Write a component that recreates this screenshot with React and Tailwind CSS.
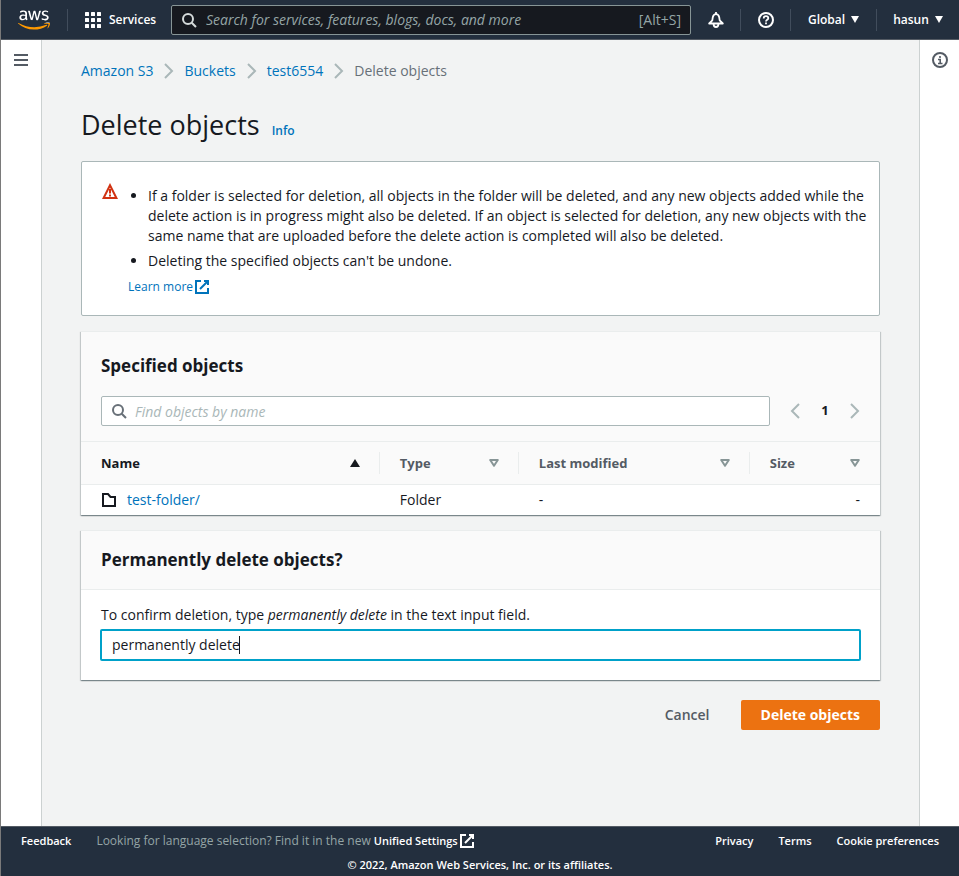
import { useState } from "react";
import { FaAws } from "react-icons/fa";

function AwsLogo() {
  return (
    <a href="#home" aria-label="AWS home" className="flex w-8 items-center">
      <svg width="0" height="0" className="absolute">
        <defs>
          <linearGradient id="aws-fill" gradientUnits="userSpaceOnUse" x1="0" y1="0" x2="0" y2="512">
            <stop offset="0.63" stopColor="#ffffff" />
            <stop offset="0.63" stopColor="#ff9900" />
          </linearGradient>
        </defs>
      </svg>
      <FaAws className="h-[26px] w-8" fill="url(#aws-fill)" />
    </a>
  );
}

function SearchIcon({ className }) {
  return (
    <svg viewBox="0 0 16 16" className={className} fill="none" stroke="currentColor" strokeWidth="2" aria-hidden="true">
      <circle cx="7" cy="7" r="5" />
      <path d="M10.7 10.7 15 15" />
    </svg>
  );
}

function ExternalIcon({ className }) {
  return (
    <svg viewBox="0 0 16 16" className={className} fill="none" stroke="currentColor" strokeWidth="2" aria-hidden="true">
      <path d="M10 2h4v4M6 10l8-8" />
      <path d="M14 9.048V14H2V2h5" />
    </svg>
  );
}

function Chevron({ left = false }) {
  return (
    <svg viewBox="0 0 16 16" className="h-4 w-4 shrink-0 text-[#aab7b8]" fill="none" stroke="currentColor" strokeWidth="2" aria-hidden="true">
      <path d={left ? "M12 1 5 8l7 7" : "m4 1 7 7-7 7"} />
    </svg>
  );
}

function Caret() {
  return (
    <svg viewBox="0 0 8 7" className="h-[7px] w-2" fill="currentColor" aria-hidden="true">
      <path d="M0 0h8L4 7z" />
    </svg>
  );
}

function SortIcon({ ascending = false }) {
  return ascending ? (
    <svg viewBox="0 0 10 8" className="h-2 w-[10px] text-[#16191f]" fill="currentColor" aria-hidden="true">
      <path d="M5 0l5 8H0z" />
    </svg>
  ) : (
    <svg viewBox="0 0 10 8" className="h-2 w-[10px] text-[#879596]" fill="none" stroke="currentColor" strokeWidth="2" strokeLinejoin="round" aria-hidden="true">
      <path d="M1.2 1h7.600L5 6.800z" />
    </svg>
  );
}

function Divider() {
  return <span className="h-[22px] w-px shrink-0 bg-[#414d5c]" />;
}

function Header() {
  return (
    <header className="flex h-10 items-center border-b border-[#545b64] bg-[#232f3e] pl-[17px] text-white">
      <AwsLogo />
      <span className="ml-[17px] flex">
        <Divider />
      </span>
      <button type="button" className="ml-[17px] flex items-center gap-2 text-[12px] font-semibold">
        <svg viewBox="0 0 16 16" className="h-4 w-4" fill="currentColor" aria-hidden="true">
          {[0, 6, 12].map((y) =>
            [0, 6, 12].map((x) => <rect key={`${x}-${y}`} x={x} y={y} width="4" height="4" rx="0.5" />)
          )}
        </svg>
        <span className="w-[45px] whitespace-nowrap">Services</span>
      </button>
      <label className="ml-[17px] flex h-[30px] min-w-0 flex-1 items-center rounded-xs border border-[#879596] bg-[#16191f] px-[9px] text-[#95a5a6]">
        <SearchIcon className="mr-[9px] h-4 w-4 shrink-0 text-[#d5dbdb]" />
        <input
          type="search"
          aria-label="Search"
          placeholder="Search for services, features, blogs, docs, and more"
          className="min-w-0 flex-1 bg-transparent text-[14px] italic outline-none placeholder:text-[#95a5a6]"
        />
        <span className="text-[14px]">[Alt+S]</span>
      </label>
      <button type="button" aria-label="Notifications" className="flex w-[49px] justify-center">
        <svg viewBox="0 0 16 16" className="h-4 w-4" fill="none" stroke="currentColor" strokeWidth="1.800" aria-hidden="true">
          <path d="M1.200 11.500h13.600L11.700 8.300 11.200 5.200C10.700 3.300 9.500 2.200 8 2.200S5.300 3.300 4.800 5.200L4.300 8.300z" strokeLinejoin="round" />
          <path d="M8 0v2M5.600 12c0 1.900 1 3 2.400 3s2.400-1.100 2.400-3" />
        </svg>
      </button>
      <Divider />
      <button type="button" aria-label="Help" className="flex w-[49px] justify-center">
        <svg viewBox="0 0 16 16" className="h-4 w-4" fill="none" stroke="currentColor" strokeWidth="2" aria-hidden="true">
          <circle cx="8" cy="8" r="7" />
          <path d="M5.700 6.400C5.700 5 6.700 4.200 8 4.200s2.300.8 2.300 2c0 1.500-2.300 1.600-2.300 3.200M8 10.600v1.700" strokeWidth="1.800" />
        </svg>
      </button>
      <Divider />
      <button type="button" className="flex w-[85px] items-center justify-center gap-[6px] text-[12px] font-semibold">
        Global <Caret />
      </button>
      <Divider />
      <button type="button" className="flex w-[82px] items-center justify-center gap-[6px] text-[12px] font-semibold">
        hasun <Caret />
      </button>
    </header>
  );
}

function Breadcrumbs() {
  return (
    <nav aria-label="Breadcrumbs">
      <ol className="flex items-center gap-[7px] text-[14px] leading-5 text-[#0073bb]">
        {["Amazon S3", "Buckets", "test6554"].map((name) => (
          <li key={name} className="flex items-center gap-2">
            <a href="#bucket">{name}</a>
            <Chevron />
          </li>
        ))}
        <li className="text-[#687078]">Delete objects</li>
      </ol>
    </nav>
  );
}

function Warning() {
  return (
    <section className="mt-[18px] flex rounded-xs border border-[#aab7b8] bg-white pt-[21px] pr-2 pb-[18px] pl-5">
      <svg viewBox="0 0 16 16" className="h-4 w-4 shrink-0 text-[#d13212]" fill="none" stroke="currentColor" strokeWidth="2" aria-label="Warning">
        <path d="M8 2.200 1.600 15h12.800z" />
        <path d="M8 6v4.500M8 11.500v2" />
      </svg>
      <div className="ml-[10px]">
        <ul className="flex list-disc flex-col gap-[5px] pt-[3px] pl-5 text-[14px] leading-5">
          <li>
            If a folder is selected for deletion, all objects in the folder will be deleted, and any new objects added while the
            delete action is in progress might also be deleted. If an object is selected for deletion, any new objects with the
            same name that are uploaded before the delete action is completed will also be deleted.
          </li>
          <li>Deleting the specified objects can't be undone.</li>
        </ul>
        <a href="#learn" className="mt-[6px] flex items-center gap-px text-[12px] leading-5 text-[#0073bb]">
          Learn more <ExternalIcon className="h-4 w-4" />
        </a>
      </div>
    </section>
  );
}

const panel =
  "border-t border-[#eaeded] bg-white shadow-[0_1px_1px_0_rgba(0,28,36,0.3),1px_1px_1px_0_rgba(0,28,36,0.15),-1px_1px_1px_0_rgba(0,28,36,0.15)]";

function HeadCell({ label, active = false, last = false }) {
  return (
    <th className="h-[43px] p-0 text-left font-bold">
      <button
        type="button"
        className={
          last
            ? "flex h-[22px] w-full items-center justify-between pr-5 pl-5"
            : "flex h-[22px] w-full items-center justify-between border-r border-[#eaeded] pr-[19px] pl-5"
        }
      >
        <span className={active ? "text-[#16191f]" : "text-[#545b64]"}>{label}</span>
        <SortIcon ascending={active} />
      </button>
    </th>
  );
}

function SpecifiedObjects() {
  return (
    <section className={`mt-[15px] ${panel}`}>
      <div className="bg-[#fafafa] px-5 pt-5 pb-[15px]">
        <h2 className="text-[17px] leading-7 font-bold">Specified objects</h2>
        <div className="mt-4 flex items-center">
          <label className="flex h-[30px] flex-1 items-center gap-2 rounded-xs border border-[#aab7b8] bg-white px-[9px]">
            <SearchIcon className="h-4 w-4 shrink-0 text-[#687078]" />
            <input
              type="search"
              aria-label="Find objects by name"
              placeholder="Find objects by name"
              className="min-w-0 flex-1 text-[14px] italic outline-none placeholder:text-[#aab7b8]"
            />
          </label>
          <div className="-mr-[3px] ml-[17px] flex items-center">
            <button type="button" aria-label="Previous page">
              <Chevron left />
            </button>
            <span className="w-11 text-center text-[13px] font-bold">1</span>
            <button type="button" aria-label="Next page">
              <Chevron />
            </button>
          </div>
        </div>
      </div>
      <table className="w-full table-fixed border-collapse text-[14px] leading-5">
        <colgroup>
          <col className="w-[37.400%]" />
          <col className="w-[17.400%]" />
          <col className="w-[28.900%]" />
          <col />
        </colgroup>
        <thead className="border-y border-[#eaeded] bg-[#fafafa] text-[13px]">
          <tr>
            <HeadCell label="Name" active />
            <HeadCell label="Type" />
            <HeadCell label="Last modified" />
            <HeadCell label="Size" last />
          </tr>
        </thead>
        <tbody>
          <tr className="h-[30px]">
            <td className="px-5">
              <div className="flex items-center gap-[10px]">
                <svg viewBox="0 0 16 16" className="h-4 w-4" fill="none" stroke="currentColor" strokeWidth="2" aria-hidden="true">
                  <path d="M2 14V2h5l2.500 3H14v9z" />
                </svg>
                <a href="#folder" className="text-[#0073bb]">test-folder/</a>
              </div>
            </td>
            <td className="px-5">Folder</td>
            <td className="px-5">-</td>
            <td className="px-5 text-right">-</td>
          </tr>
        </tbody>
      </table>
    </section>
  );
}

function Confirm() {
  const [value, setValue] = useState("permanently delete");
  return (
    <section className={`mt-[15px] ${panel}`}>
      <div className="border-b border-[#eaeded] bg-[#fafafa] px-5 py-[15px]">
        <h2 className="text-[17px] leading-7 font-bold">Permanently delete objects?</h2>
      </div>
      <div className="px-[19px] pt-[15px] pb-[19px]">
        <label htmlFor="confirm" className="block px-px text-[14px] leading-5">
          To confirm deletion, type <em>permanently delete</em> in the text input field.
        </label>
        <div className="relative mt-1">
          <input
            id="confirm"
            type="text"
            value={value}
            onChange={(event) => setValue(event.target.value)}
            className="block h-8 w-full rounded-xs border-2 border-[#00a1c9] bg-white px-[10px] text-[14px] outline-none"
          />
          <span className="absolute top-[7px] left-[139px] h-[18px] w-px bg-[#16191f]" />
        </div>
      </div>
    </section>
  );
}

function Footer() {
  return (
    <footer className="h-[50px] border-t border-[#545b64] bg-[#232f3e] px-5 pt-1 text-[11px] font-semibold text-white">
      <div className="flex items-center leading-5">
        <a href="#feedback">Feedback</a>
        <p className="ml-[25px] flex items-center">
          <span className="text-[12px] font-normal text-[#95a5a6]">
            Looking for language selection? Find it in the new&nbsp;
          </span>
          <a href="#settings" className="flex items-center gap-px">
            Unified Settings <ExternalIcon className="h-4 w-4" />
          </a>
        </p>
        <nav className="ml-auto flex gap-[25px]">
          <a href="#privacy">Privacy</a>
          <a href="#terms">Terms</a>
          <a href="#cookies">Cookie preferences</a>
        </nav>
      </div>
      <p className="mt-1 text-center leading-5">© 2022, Amazon Web Services, Inc. or its affiliates.</p>
    </footer>
  );
}

export default function App() {
  return (
    <div className="flex min-h-screen flex-col border-l border-[#7a7a7a] bg-white font-['Open_Sans','Noto_Sans',sans-serif] text-[#16191f]">
      <Header />
      <div className="flex flex-1">
        <aside className="w-[41px] shrink-0 border-r border-[#ccd1d1] pt-3 pl-3">
          <button type="button" aria-label="Open navigation" className="block">
            <svg viewBox="0 0 16 16" className="h-4 w-4 text-[#545b64]" fill="none" stroke="currentColor" strokeWidth="2" aria-hidden="true">
              <path d="M1 3h14M1 8h14M1 13h14" />
            </svg>
          </button>
        </aside>
        <main className="min-w-0 flex-1 bg-[#f2f3f3] px-[39px] pt-[21px]">
          <Breadcrumbs />
          <div className="mt-[26px] flex items-baseline gap-3">
            <h1 className="text-[27px] leading-9">Delete objects</h1>
            <a href="#info" className="text-[12px] font-semibold text-[#0073bb]">Info</a>
          </div>
          <Warning />
          <SpecifiedObjects />
          <Confirm />
          <div className="mt-5 flex justify-end gap-[11px] text-[14px] leading-5 font-bold">
            <button type="button" className="h-[30px] px-5 font-semibold text-[#545b64]">Cancel</button>
            <button type="button" className="h-[30px] rounded-xs bg-[#ec7211] px-5 text-white">Delete objects</button>
          </div>
        </main>
        <aside className="w-10 shrink-0 border-l border-[#ccd1d1] pt-3 pl-3">
          <button type="button" aria-label="Open info panel" className="block">
            <svg viewBox="0 0 16 16" className="h-4 w-4 text-[#545b64]" fill="none" stroke="currentColor" strokeWidth="2" aria-hidden="true">
              <circle cx="8" cy="8" r="7" />
              <path d="M8 4v2M6 7.500h2.200v4M6 11.500h4.500" strokeWidth="1.600" />
            </svg>
          </button>
        </aside>
      </div>
      <Footer />
    </div>
  );
}
